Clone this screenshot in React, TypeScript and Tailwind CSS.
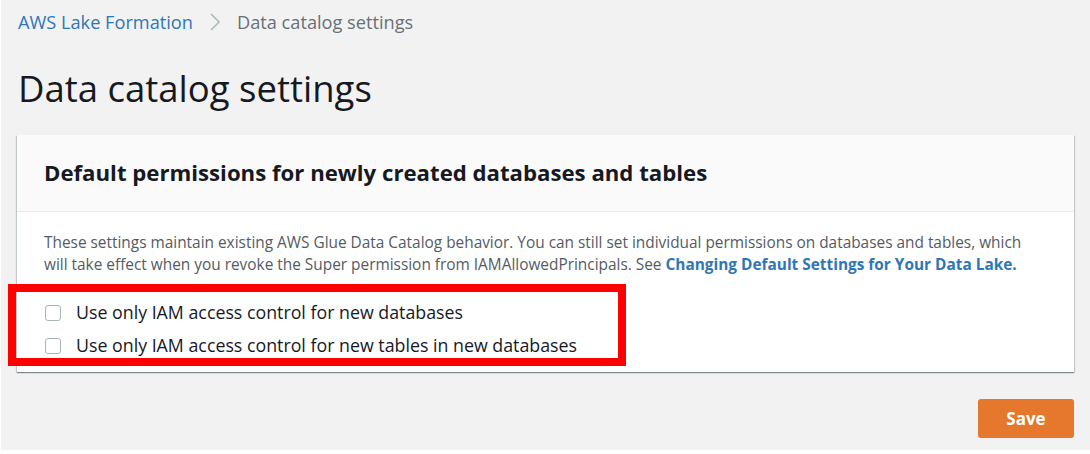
import React from "react";

const font = { fontFamily: '"Open Sans", "Noto Sans", sans-serif' };

function Checkbox() {
  return <span className="inline-block w-[16px] h-[16px] rounded-[3px] border border-[#aab7b8] bg-white shrink-0" />;
}

export default function App() {
  return (
    <div className="w-[1090px] h-[454px] bg-white overflow-hidden" style={font}>
      <div className="relative ml-[1px] h-[450px] bg-[#f2f2f2] flex flex-col">
        {/* breadcrumb */}
        <div className="flex items-center h-[44px] pl-[17px] text-[18.2px] leading-none">
          <span className="text-[#2f76b7]">AWS Lake Formation</span>
          <svg className="mx-[16px]" width="12" height="20" viewBox="0 0 12 20" fill="none">
            <path d="M2 2 L10 10 L2 18" stroke="#aab7b8" strokeWidth="1.5" />
          </svg>
          <span className="text-[#687078]">Data catalog settings</span>
        </div>
        {/* title */}
        <h1 className="pl-[17px] mt-[22px] text-[36.5px] leading-[44px] text-[#16191f]">Data catalog settings</h1>
        {/* card */}
        <div className="ml-[16px] mt-[25px] w-[1057px] bg-white shadow-[0_1px_1px_0_rgba(0,28,36,0.3),1px_1px_1px_0_rgba(0,28,36,0.15),-1px_1px_1px_0_rgba(0,28,36,0.15)]">
          <div className="h-[77px] bg-[#fafafa] border-b border-[#eaeded] flex items-center pl-[27px]">
            <h2 className="text-[22.2px] font-bold text-[#16191f]">Default permissions for newly created databases and tables</h2>
          </div>
          <div className="pl-[27px] pt-[20px] pb-[18px]">
            <p className="text-[15.4px] leading-[22px] text-[#545b64] w-[990px]">
              These settings maintain existing AWS Glue Data Catalog behavior. You can still set individual permissions on databases and tables, which will take effect when you revoke the Super permission from IAMAllowedPrincipals. See{" "}
              <span className="font-bold text-[#2f76b7]">Changing Default Settings for Your Data Lake.</span>
            </p>
            <div className="mt-[28px] flex flex-col gap-[16px] text-[17.8px] text-[#16191f] leading-[17px]">
              <label className="flex items-center gap-[15px] pl-[1px]">
                <Checkbox />
                <span>Use only IAM access control for new databases</span>
              </label>
              <label className="flex items-center gap-[15px] pl-[1px]">
                <Checkbox />
                <span>Use only IAM access control for new tables in new databases</span>
              </label>
            </div>
          </div>
        </div>
        {/* save */}
        <div className="flex justify-end pr-[16px] mt-[27px]">
          <button className="w-[96px] h-[39px] rounded-[3px] bg-[#e5782c] text-white font-bold text-[17px]">Save</button>
        </div>
        {/* annotation */}
        <div className="absolute left-[7px] top-[284px] w-[618px] h-[82px] border-[8px] border-[#ff0000]" />
      </div>
    </div>
  );
}
